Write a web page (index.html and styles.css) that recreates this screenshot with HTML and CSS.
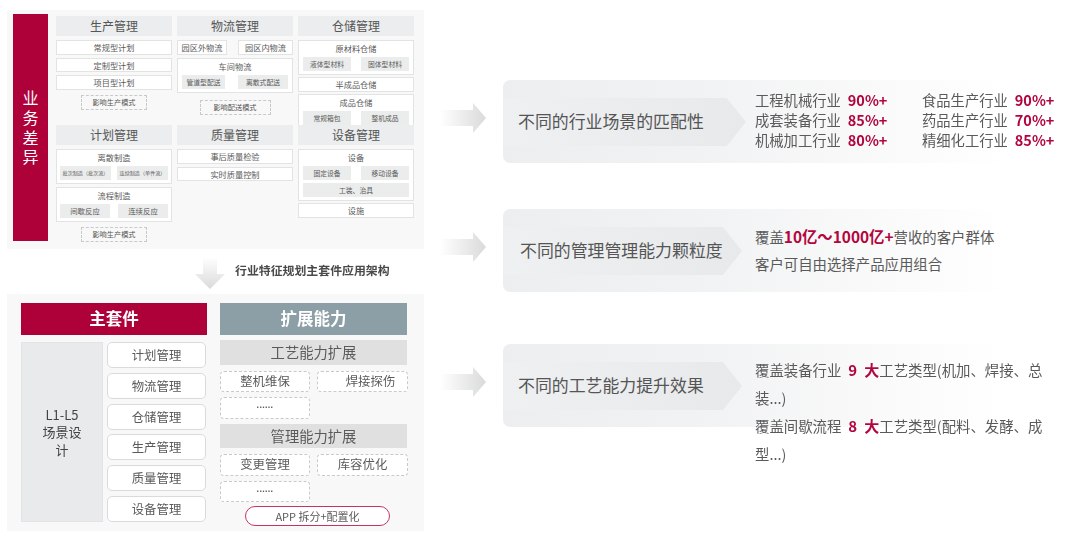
FILE: index.html
```html
<!DOCTYPE html>
<html lang="zh">
<head>
<meta charset="utf-8">
<title>行业特征规划主套件应用架构</title>
<link rel="stylesheet" href="styles.css">
</head>
<body>
<svg class="defs" width="0" height="0" aria-hidden="true">
  <defs>
    <linearGradient id="fadeR" x1="0" y1="0" x2="1" y2="0"><stop offset="0" stop-color="#fff"/><stop offset="1" stop-color="#d9dada"/></linearGradient>
    <linearGradient id="fadeD" x1="0" y1="0" x2="0" y2="1"><stop offset="0" stop-color="#fff"/><stop offset="1" stop-color="#d9dada"/></linearGradient>
  </defs>
</svg>
<main class="page">
  <section class="left">
    <div class="panel top-panel">
      <div class="side-bar">业<br>务<br>差<br>异</div>
      <div class="matrix">
        <div class="col c1">
          <h3 class="head">生产管理</h3>
          <div class="box">常规型计划</div>
          <div class="box">定制型计划</div>
          <div class="box">项目型计划</div>
          <div class="note n1">影响生产模式</div>
        </div>
        <div class="col c2">
          <h3 class="head">物流管理</h3>
          <div class="pair"><div class="box b49">园区外物流</div><div class="box b55">园区内物流</div></div>
          <div class="group">
            <div class="group-title">车间物流</div>
            <div class="chips"><span class="chip w43">管道型配送</span><span class="chip w50">离散式配送</span></div>
          </div>
          <div class="note n2">影响配送模式</div>
        </div>
        <div class="col c3">
          <h3 class="head">仓储管理</h3>
          <div class="group">
            <div class="group-title">原材料仓储</div>
            <div class="chips"><span class="chip">液体型材料</span><span class="chip">固体型材料</span></div>
          </div>
          <div class="box tight">半成品仓储</div>
          <div class="group">
            <div class="group-title">成品仓储</div>
            <div class="chips"><span class="chip">常规箱包</span><span class="chip">整机成品</span></div>
          </div>
        </div>
        <div class="col c1">
          <h3 class="head">计划管理</h3>
          <div class="group">
            <div class="group-title">离散制造</div>
            <div class="chips wide"><span class="chip tiny">批次制造（批次流）</span><span class="chip tiny">连续制造（单件流）</span></div>
          </div>
          <div class="group">
            <div class="group-title">流程制造</div>
            <div class="chips wide"><span class="chip">间歇反应</span><span class="chip">连续反应</span></div>
          </div>
          <div class="note n1">影响生产模式</div>
        </div>
        <div class="col c2">
          <h3 class="head">质量管理</h3>
          <div class="box">事后质量检验</div>
          <div class="box">实时质量控制</div>
        </div>
        <div class="col c3">
          <h3 class="head">设备管理</h3>
          <div class="group">
            <div class="group-title">设备</div>
            <div class="chips"><span class="chip">固定设备</span><span class="chip">移动设备</span></div>
            <div class="chips"><span class="chip full">工装、治具</span></div>
          </div>
          <div class="box tight">设施</div>
        </div>
      </div>
    </div>

    <div class="caption">
      <svg class="down" width="30" height="32" viewBox="0 0 30 32"><path d="M8 0H22V17H30L15 32L0 17H8Z" fill="url(#fadeD)"/></svg>
      <strong>行业特征规划主套件应用架构</strong>
    </div>

    <div class="panel suite">
      <div class="suite-main">
        <h2 class="banner red">主套件</h2>
        <div class="suite-body">
          <div class="scene">L1-L5<br>场景设<br>计</div>
          <ul class="list">
            <li>计划管理</li><li>物流管理</li><li>仓储管理</li><li>生产管理</li><li>质量管理</li><li>设备管理</li>
          </ul>
        </div>
      </div>
      <div class="suite-ext">
        <h2 class="banner slate">扩展能力</h2>
        <h3 class="sub">工艺能力扩展</h3>
        <div class="dash-grid">
          <div class="dash">整机维保</div><div class="dash shift">焊接探伤</div><div class="dash dots">......</div>
        </div>
        <h3 class="sub">管理能力扩展</h3>
        <div class="dash-grid">
          <div class="dash">变更管理</div><div class="dash">库容优化</div><div class="dash dots">......</div>
        </div>
        <div class="pill">APP 拆分+配置化</div>
      </div>
    </div>
  </section>

  <section class="right">
    <div class="row r1">
      <svg class="arrow" width="46" height="30" viewBox="0 0 46 30"><path d="M0 7H33V0L46 15L33 30V23H0Z" fill="url(#fadeR)"/></svg>
      <div class="card">
        <div class="ribbon">不同的行业场景的匹配性</div>
        <div class="stats">
          <p>工程机械行业<b>90%+</b></p><p>食品生产行业<b>90%+</b></p>
          <p>成套装备行业<b>85%+</b></p><p>药品生产行业<b>70%+</b></p>
          <p>机械加工行业<b>80%+</b></p><p>精细化工行业<b>85%+</b></p>
        </div>
      </div>
    </div>
    <div class="row r2">
      <svg class="arrow" width="46" height="30" viewBox="0 0 46 30"><path d="M0 7H33V0L46 15L33 30V23H0Z" fill="url(#fadeR)"/></svg>
      <div class="card">
        <div class="ribbon short">不同的管理管理能力颗粒度</div>
        <div class="lines l2">
          <p>覆盖<b class="big">10亿～1000亿+</b>营收的客户群体</p>
          <p>客户可自由选择产品应用组合</p>
        </div>
      </div>
    </div>
    <div class="row r3">
      <svg class="arrow" width="46" height="30" viewBox="0 0 46 30"><path d="M0 7H33V0L46 15L33 30V23H0Z" fill="url(#fadeR)"/></svg>
      <div class="card">
        <div class="ribbon short">不同的工艺能力提升效果</div>
        <div class="lines l3">
          <p>覆盖装备行业<b class="num">9</b><b class="num">大</b>工艺类型(机加、焊接、总装...)</p>
          <p>覆盖间歇流程<b class="num">8</b><b class="num">大</b>工艺类型(配料、发酵、成型...)</p>
        </div>
      </div>
    </div>
  </section>
</main>
</body>
</html>
```

FILE: styles.css
```css
* { box-sizing: border-box; margin: 0; padding: 0; }
html, body { width: 1080px; height: 538px; overflow: hidden; background: #fff; }
body { font-family: "Noto Sans CJK SC", "Liberation Sans", sans-serif; color: #5a5a5a; }
.defs { display: block; height: 0; }
.page { display: flex; width: 1080px; height: 538px; filter: blur(.35px); }
h2, h3 { font-weight: 400; }
ul { list-style: none; }

.left { width: 440px; padding: 10px 0 0 7px; flex: none; }
.panel { width: 417px; background: #f8f8f8; }
.top-panel { height: 239px; display: flex; padding: 4px 0 0 6px; }
.side-bar { width: 35px; height: 227px; background: #ae0039; color: #fff; font-size: 16px; line-height: 19.7px; display: flex; align-items: center; justify-content: center; text-align: center; flex: none; }

.matrix { margin: 2px 0 0 8px; width: 358px; display: grid; grid-template-columns: 116px 116px 116px; column-gap: 5px; grid-template-rows: 109px 1fr; }
.col { display: flex; flex-direction: column; gap: 3px; align-items: stretch; }
.head { height: 20px; margin-bottom: 1px; background: #ebedee; font-size: 12px; line-height: 20px; text-align: center; color: #555; }
.box { height: 14.5px; background: #fff; border: 1px solid #e2e3e3; font-size: 8.2px; line-height: 12.5px; text-align: center; white-space: nowrap; }
.pair { display: flex; justify-content: space-between; }
.b49 { width: 50px; }
.b55 { width: 55px; }
.group { background: #fff; border: 1px solid #e2e3e3; display: flex; flex-direction: column; gap: 3px; padding: 0 2px 3px; }
.group-title { font-size: 8.2px; line-height: 14px; height: 13px; text-align: center; }
.chips { display: flex; justify-content: space-between; padding: 0 2px; }
.chips.wide { padding: 0 1px; }
.chip { width: 48px; height: 14px; background: #ebecec; font-size: 6.8px; line-height: 14px; text-align: center; white-space: nowrap; }
.chip.w43 { width: 43px; }
.chip.w50 { width: 50px; }
.chip.full { width: 100%; }
.chip.tiny { width: 51px; font-size: 5.1px; }
.wide .chip:not(.tiny) { width: 50px; font-size: 7.4px; }
.note { height: 15px; border: 1px dashed #c9c9c9; font-size: 7.2px; line-height: 13px; text-align: center; align-self: center; margin-top: 2px; background: transparent; color: #555; }
.n1 { width: 66px; }
.n2 { width: 71px; margin-top: 4px; }
.tight { margin: -1px 0; }

.caption { height: 45px; display: flex; align-items: flex-start; padding: 8px 0 0 188px; gap: 10px; }
.caption strong { font-size: 11.9px; line-height: 17px; margin-top: 4px; color: #4a4a4a; white-space: nowrap; }
.down { flex: none; }

.suite { height: 237px; display: flex; padding: 9px 0 0 14px; gap: 13px; }
.suite-main { width: 186px; }
.suite-ext { width: 188px; display: flex; flex-direction: column; }
.banner { height: 32px; color: #fff; font-size: 16.5px; font-weight: 700; line-height: 31px; text-align: center; }
.red { background: #ae0039; }
.slate { background: #8c9fa6; width: 187px; }
.suite-body { display: flex; gap: 4px; margin-top: 7px; }
.scene { width: 82px; height: 180px; background: #e8eaec; border: 1px solid #e1e3e4; color: #444; font-size: 13px; line-height: 17.5px; display: flex; align-items: center; justify-content: center; text-align: center; flex: none; }
.list { width: 99px; display: flex; flex-direction: column; gap: 4.8px; }
.list li { height: 26px; background: #fff; border: 1px solid #d9dbdb; border-radius: 5px; font-size: 12.4px; line-height: 24px; text-align: center; }
.sub { height: 24.5px; background: #e0e0e0; width: 187px; margin-top: 5px; font-size: 14.3px; line-height: 24px; text-align: center; }
.dash-grid { display: grid; grid-template-columns: 90px 91px; column-gap: 7px; row-gap: 5px; margin-top: 6px; }
.dash { height: 21.5px; background: #fff; border: 1px dashed #c9c9c9; border-radius: 4px; font-size: 12.4px; line-height: 19px; text-align: center; }
.shift { padding-left: 16px; }
.dots { font-size: 9px; font-family: "Liberation Sans", sans-serif; font-weight: 700; letter-spacing: .3px; line-height: 15px; }
.pill { width: 145px; height: 20px; margin: 4px 0 0 25px; background: #fff; border: 1px solid #c7335f; border-radius: 10px; font-size: 11px; line-height: 18px; text-align: center; }

.right { flex: 1; padding-top: 80px; min-width: 0; }
.row { display: flex; align-items: flex-start; }
.r2 { margin-top: 46px; }
.r3 { margin-top: 52px; }
.arrow { flex: none; margin-top: 23px; margin-right: 17px; }
.card { width: 548px; height: 83px; border-radius: 7px; background: linear-gradient(90deg, #eceef0 0, #f1f2f3 35%, #fff 92%); display: flex; align-items: flex-start; }
.ribbon { width: 243px; height: 48px; margin-top: 18px; flex: none; padding-left: 15px; font-size: 16.9px; line-height: 46px; color: #555; white-space: nowrap; background: linear-gradient(90deg, #eff0f2, #e7e9eb); clip-path: polygon(0 0, 92% 0, 100% 50%, 92% 100%, 0 100%); }
.ribbon.short { width: 239px; }
.r2 .ribbon { padding-left: 17px; }
.stats { display: grid; grid-template-columns: 167px 140px; margin: 10px 0 0 9px; flex: none; font-size: 14.3px; line-height: 20px; white-space: nowrap; }
.stats b { margin-left: 7px; color: #b2063e; font-size: 14.5px; }
.lines { flex: none; font-size: 14.4px; margin-left: 13px; }
.l2 { margin-top: 14px; line-height: 27px; }
.l3 { width: 295px; margin-top: 12px; line-height: 28px; }
.big { color: #b2063e; font-size: 15.4px; font-weight: 700; }
.num { color: #b2063e; font-size: 15px; font-weight: 700; margin-left: 7px; }
```
